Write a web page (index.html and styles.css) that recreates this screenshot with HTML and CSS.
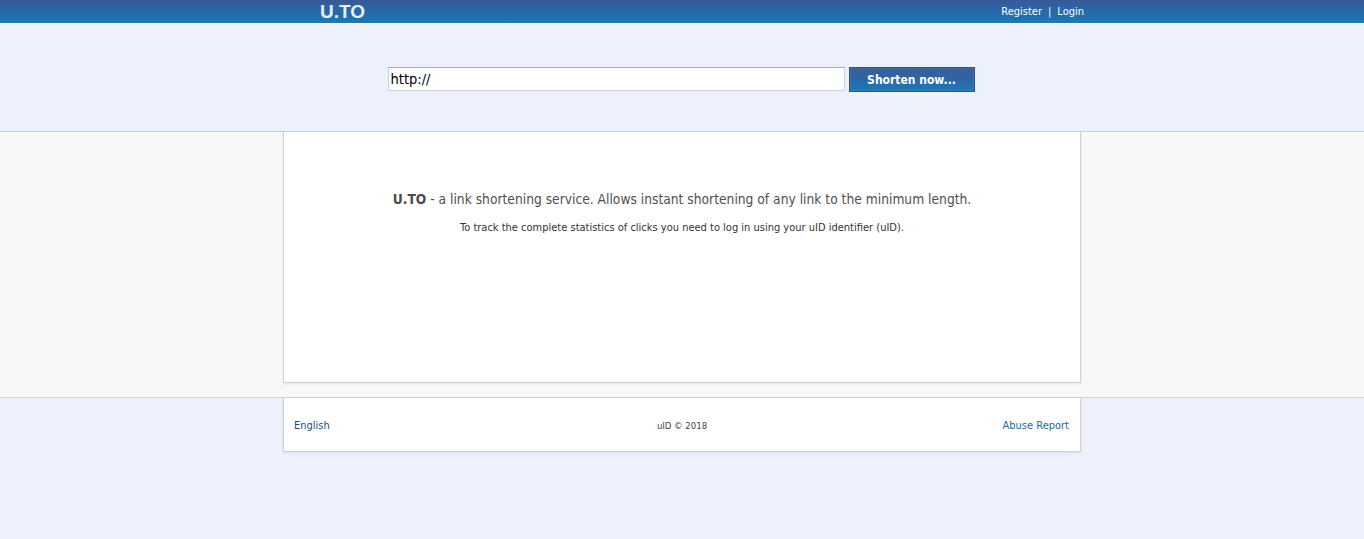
FILE: index.html
```html
<!DOCTYPE html>
<html>
<head>
<meta charset="utf-8">
<title>U.TO</title>
<link rel="stylesheet" href="styles.css">
</head>
<body>
<div class="topbar">
  <div class="topbar-inner">
    <a class="logo" href="#">U.TO</a>
    <div class="auth"><a href="#">Register</a><span class="sep">|</span><a href="#">Login</a></div>
  </div>
</div>
<div class="form-band">
  <form class="shorten-form">
    <input class="url-input" type="text" value="http://">
    <button class="shorten-btn" type="button">Shorten now...</button>
  </form>
</div>
<div class="main-band">
  <div class="content-box">
    <p class="lead"><b>U.TO</b> - a link shortening service. Allows instant shortening of any link to the minimum length.</p>
    <p class="note">To track the complete statistics of clicks you need to log in using your uID identifier (uID).</p>
  </div>
</div>
<div class="footer-band">
  <div class="footer-box">
    <a class="lang" href="#">English</a>
    <span class="copy">uID © 2018</span>
    <a class="abuse" href="#">Abuse Report</a>
  </div>
</div>
</body>
</html>
```
FILE: styles.css
```css
html, body {
  margin: 0;
  padding: 0;
  background: #edf1fb;
  font-family: "DejaVu Sans Condensed", "DejaVu Sans", sans-serif;
}
a { text-decoration: none; }
.topbar {
  height: 23px;
  background: linear-gradient(to bottom, #3a5898 0%, #2768a8 50%, #1a7ab8 100%);
}
.topbar-inner {
  width: 798px;
  margin: 0 auto;
  display: flex;
  align-items: center;
  justify-content: space-between;
  height: 23px;
}
.logo {
  font-family: "Liberation Sans", Arial, sans-serif;
  font-weight: bold;
  font-size: 19px;
  color: #e6eef6;
  margin-left: 37px;
  line-height: 23px;
}
.auth {
  font-size: 11px;
  color: #fff;
  display: flex;
  align-items: center;
  margin-right: -3px;
}
.auth a { color: #fff; }
.sep { margin: 0 6px; }
.form-band {
  height: 109px;
  border-bottom: 1px solid #ccd0d8;
  box-sizing: border-box;
  display: flex;
  justify-content: center;
  padding-top: 44px;
}
.shorten-form {
  display: flex;
  align-items: flex-start;
  gap: 4px;
  margin-left: -2px;
  height: 25px;
}
.url-input {
  width: 457px;
  height: 24px;
  box-sizing: border-box;
  border: 1px solid #ccd0d6;
  border-top-color: #a8acb2;
  padding: 0 2px;
  font-family: "DejaVu Sans Condensed", "DejaVu Sans", sans-serif;
  font-size: 14.5px;
  color: #000;
  background: #fff;
  outline: none;
  margin: 0;
}
.shorten-btn {
  width: 126px;
  height: 25px;
  box-sizing: border-box;
  border: 1px solid #2d4f8e;
  background: linear-gradient(to bottom, #3c5a9a 0%, #2b66a6 50%, #1c7ab9 100%);
  box-shadow: inset 0 0 0 1px rgba(255,255,255,0.08);
  color: #fff;
  font-family: "DejaVu Sans Condensed", "DejaVu Sans", sans-serif;
  font-weight: bold;
  font-size: 12px;
  padding: 0;
  margin: 0;
}
.main-band {
  background: #f8f8f8;
  border-bottom: 1px solid #d2d2d2;
  padding-bottom: 14px;
}
.content-box {
  width: 798px;
  height: 251px;
  margin: 0 auto;
  background: #fff;
  box-sizing: border-box;
  border: 1px solid #cfcfcf;
  border-top: none;
  box-shadow: 0 1px 3px rgba(0,0,0,0.08);
  text-align: center;
  padding-top: 57px;
  color: #555;
}
.lead {
  margin: 0;
  font-size: 13.7px;
  color: #505050;
  line-height: 20px;
}
.lead b { color: #4a4a4a; }
.note {
  margin: 12px 0 0;
  font-size: 11px;
  color: #333;
  line-height: 14px;
}
.footer-band {
  padding-bottom: 88px;
}
.footer-box {
  width: 798px;
  height: 54px;
  margin: 0 auto;
  background: #fff;
  box-sizing: border-box;
  border: 1px solid #cfcfcf;
  border-top: none;
  box-shadow: 0 1px 3px rgba(0,0,0,0.08);
  display: grid;
  grid-template-columns: 1fr auto 1fr;
  align-items: center;
  padding: 2px 10px 0;
  font-size: 11px;
}
.lang { color: #1d4f7a; font-size: 11px; justify-self: start; }
.copy { color: #444; font-size: 9.5px; }
.abuse { color: #1d6aa0; font-size: 11px; justify-self: end; margin-right: 1px; }
```
